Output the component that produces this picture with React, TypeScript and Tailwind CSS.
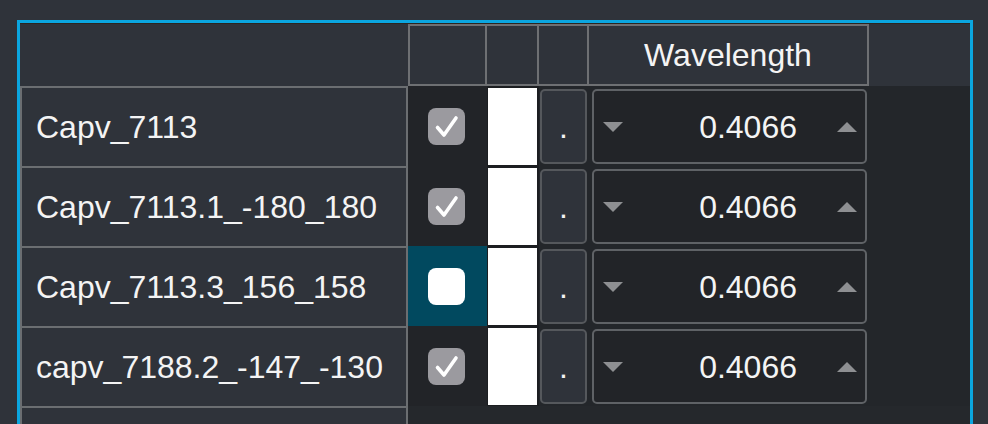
const rows = [
  { name: 'Capv_7113', checked: true, value: '0.4066' },
  { name: 'Capv_7113.1_-180_180', checked: true, value: '0.4066' },
  { name: 'Capv_7113.3_156_158', checked: false, value: '0.4066', active: true },
  { name: 'capv_7188.2_-147_-130', checked: true, value: '0.4066' },
];

function CheckBox({ checked }: { checked: boolean }) {
  return (
    <svg width="37" height="37" viewBox="0 0 37 37">
      <rect x="0" y="0" width="37" height="37" rx="8" fill={checked ? '#9b9a9f' : '#ffffff'} />
      {checked && (
        <path
          d="M9.5 19.5 L16 27 L28 10"
          fill="none"
          stroke="#ffffff"
          strokeWidth="3.6"
          strokeLinecap="round"
          strokeLinejoin="round"
        />
      )}
    </svg>
  );
}

function Triangle({ up }: { up?: boolean }) {
  return (
    <svg width="20" height="10" viewBox="0 0 20 10" className="shrink-0">
      <polygon points={up ? '10,0 20,10 0,10' : '0,0 20,0 10,10'} fill="#8e8f92" />
    </svg>
  );
}

export default function App() {
  return (
    <div className="h-[424px] w-[988px] overflow-hidden bg-[#2f333a] pl-[17px] pt-[20px] font-['Liberation_Sans',Arial,sans-serif] text-[32px] text-[#f4f4f4]">
      <div className="h-[420px] w-[956px] border-x-[3px] border-t-[3px] border-[#0ba6e0] bg-[#23262a]">
        <div className="border-t border-[#2c2620]" />

        {/* header */}
        <div className="flex h-[62px] bg-[#2f333a]">
          <div className="w-[388px]" />
          <div className="w-[79px] border-2 border-[#6e7073]" />
          <div className="w-[52px] border-y-2 border-r-2 border-[#6e7073]" />
          <div className="w-[50px] border-y-2 border-r-2 border-[#6e7073]" />
          <div className="flex w-[280px] items-center justify-center border-y-2 border-r-2 border-[#6e7073]">
            Wavelength
          </div>
          <div className="flex-1" />
        </div>

        {/* body */}
        {rows.map((row) => (
          <div key={row.name} className="flex h-[80px]">
            <div className="flex w-[388px] items-center border-x-2 border-t-2 border-[#6b6e71] bg-[#2f333a] pl-[14px]">
              {row.name}
            </div>
            <div
              className={`flex w-[79px] items-center justify-center pr-[2px] ${
                row.active ? 'bg-[#01495f]' : 'bg-[#222428]'
              }`}
            >
              <CheckBox checked={row.checked} />
            </div>
            <div className="w-[52px] bg-[#1c1e21] pb-[1px] pl-[1px] pr-[2px] pt-[2px]">
              <div className="h-full bg-white" />
            </div>
            <div className="w-[50px] pb-[2px] pl-[1px] pr-[2px] pt-[3px]">
              <div className="flex h-full items-center justify-center rounded-[5px] border-2 border-[#55585c] bg-[#2f333a]">
                .
              </div>
            </div>
            <div className="w-[280px] pb-[2px] pl-[3px] pr-[2px] pt-[3px]">
              <div className="flex h-full items-center rounded-[5px] border-2 border-[#5f6266] bg-[#222428] pl-[9px] pr-[8px]">
                <Triangle />
                <div className="flex-1 pr-[40px] text-right">{row.value}</div>
                <Triangle up />
              </div>
            </div>
            <div className="flex-1" />
          </div>
        ))}

        <div className="flex h-[40px]">
          <div className="w-[388px] border-x-2 border-t-2 border-[#6b6e71] bg-[#2f333a]" />
          <div className="flex-1 bg-[#25282c]" />
        </div>
      </div>
    </div>
  );
}
